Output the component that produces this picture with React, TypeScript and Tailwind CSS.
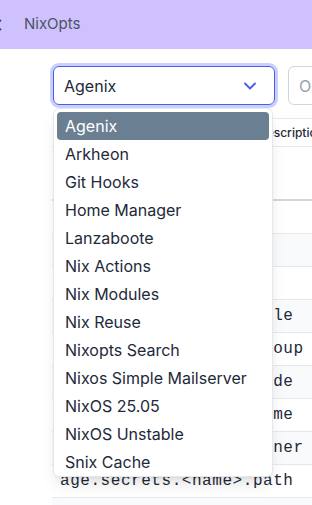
import { X, ChevronDown } from "lucide-react";

const projects = [
  "Agenix",
  "Arkheon",
  "Git Hooks",
  "Home Manager",
  "Lanzaboote",
  "Nix Actions",
  "Nix Modules",
  "Nix Reuse",
  "Nixopts Search",
  "Nixos Simple Mailserver",
  "NixOS 25.05",
  "NixOS Unstable",
  "Snix Cache",
];

const options = [
  "age.ageBin",
  "age.identityPaths",
  "age.secrets",
  "age.secrets.<name>.file",
  "age.secrets.<name>.group",
  "age.secrets.<name>.mode",
  "age.secrets.<name>.name",
  "age.secrets.<name>.owner",
  "age.secrets.<name>.path",
  "age.secrets.<name>.symlink",
];

export default function App() {
  const selected = "Agenix";

  return (
    <div className="relative w-[312px] h-[505px] overflow-hidden bg-white font-['Inter',sans-serif]">
      <header className="h-[49px] bg-[#cec1fd] flex items-center">
        <X size={18} strokeWidth={2.25} className="-ml-[13px] text-gray-700 shrink-0" />
        <span className="ml-[19px] text-[15px] text-gray-600">NixOpts</span>
      </header>

      <main className="pl-[52px] pt-[17px]">
        <div className="flex gap-[13px] w-[600px]">
          <div className="ml-[1px] w-[222px] h-[39px] shrink-0 rounded-md border-[1.5px] border-[#4a5cf0] ring-[3px] ring-[#c9d0fc] flex items-center justify-between px-[10px]">
            <span className="text-[16px] text-gray-800">{selected}</span>
            <ChevronDown size={20} strokeWidth={2.25} className="text-[#4a5cf0] mr-[4px]" />
          </div>
          <div className="w-[300px] h-[39px] shrink-0 rounded-md border border-gray-300 flex items-center px-[10px]">
            <span className="text-[16px] text-gray-400">Option name</span>
          </div>
        </div>

        <div className="mt-[13px] w-[600px]">
          <div className="h-[29px] border-y border-gray-200 flex items-center text-xs font-medium text-gray-800">
            <span className="w-[206px] pl-[8px]">Name</span>
            <span>Description</span>
          </div>
          <div className="h-[54px] border-b-2 border-gray-300"></div>
          {options.map((name, i) => (
            <div
              key={"optionrow" + name}
              className={
                "h-[33px] border-b border-gray-200 flex items-center pl-[8px] " +
                (i % 2 === 1 ? "bg-gray-50" : "bg-white")
              }
            >
              <span className="font-['Liberation_Mono',monospace] text-[16px] tracking-[0.55px] text-gray-800">
                {name}
              </span>
            </div>
          ))}
        </div>
      </main>

      <ul className="absolute left-[53px] top-[108px] w-[220px] bg-white rounded-md border border-gray-200 shadow-lg px-[3px] pt-[3px] pb-0">
        {projects.map((p) => (
          <li
            key={"project" + p}
            className={
              "h-[28px] flex items-center px-[8px] rounded text-[16px] " +
              (p === selected ? "bg-[#6b7f92] text-white" : "text-gray-800")
            }
          >
            {p}
          </li>
        ))}
      </ul>
    </div>
  );
}
